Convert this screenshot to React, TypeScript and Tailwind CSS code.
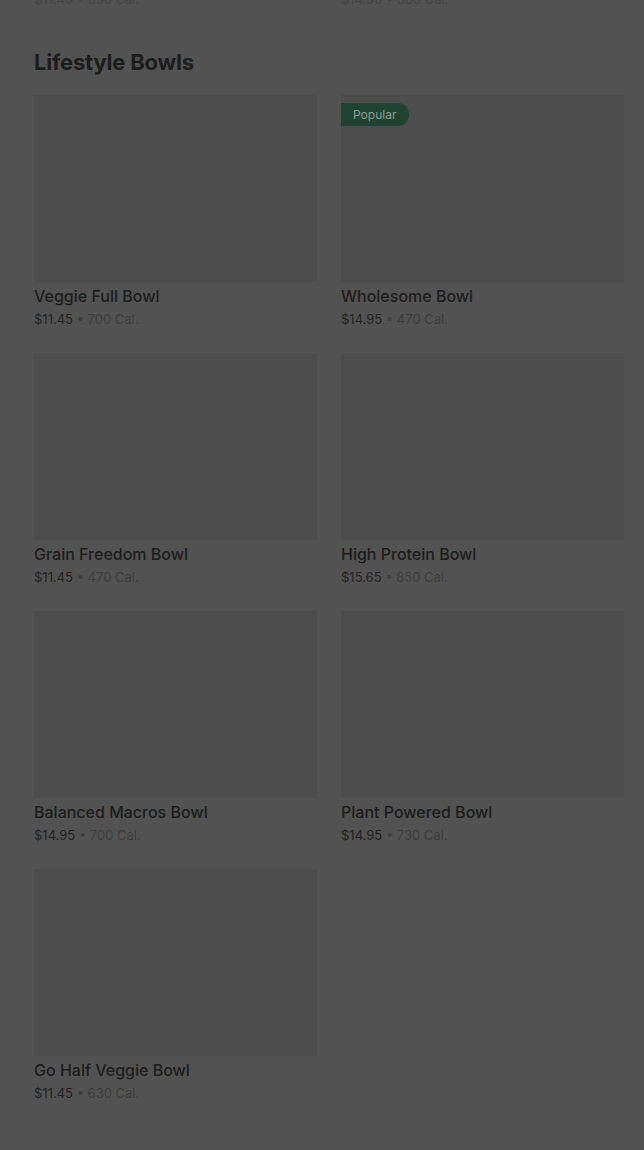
const bowls = [
  { name: 'Veggie Full Bowl', price: '$11.45', cal: '700 Cal.' },
  { name: 'Wholesome Bowl', price: '$14.95', cal: '470 Cal.', popular: true },
  { name: 'Grain Freedom Bowl', price: '$11.45', cal: '470 Cal.' },
  { name: 'High Protein Bowl', price: '$15.65', cal: '850 Cal.' },
  { name: 'Balanced Macros Bowl', price: '$14.95', cal: '700 Cal.' },
  { name: 'Plant Powered Bowl', price: '$14.95', cal: '730 Cal.' },
  { name: 'Go Half Veggie Bowl', price: '$11.45', cal: '630 Cal.' },
];

function BowlCard({ name, price, cal, popular }: { name: string; price: string; cal: string; popular?: boolean }) {
  return (
    <div className="flex flex-col">
      <div className="relative h-[187px] bg-[#4d4d4d]">
        {popular && (
          <span className="absolute left-0 top-[8px] h-[23px] pl-[12px] pr-[13px] flex items-center rounded-r-full bg-[#1e4431] text-[#8e9c93] text-[12px]">
            Popular
          </span>
        )}
      </div>
      <div className="mt-[4px] text-[16px] leading-[20px] font-medium text-[#1c1c1c]">{name}</div>
      <div className="mt-[3px] text-[13px] leading-[20px] text-[#222222]">
        {price} <span className="text-[#3e3e3e]">•</span> <span className="text-[#3d3d3d]">{cal}</span>
      </div>
    </div>
  );
}

export default function App() {
  return (
    <div className="h-[1150px] bg-[#525252] overflow-hidden pl-[34px] pr-[20px]" style={{ fontFamily: 'Inter, "Noto Sans", sans-serif' }}>
      {/* tail of the previous section */}
      <div className="grid grid-cols-2 gap-x-[24px] -mt-[10px] text-[13px] leading-[18px] text-[#454545]">
        <div>$11.45 • 630 Cal.</div>
        <div>$14.95 • 580 Cal.</div>
      </div>

      <h2 className="mt-[39px] text-[22px] leading-[30px] font-bold tracking-[-0.2px] text-[#1c1c1c]">Lifestyle Bowls</h2>

      <div className="mt-[18px] grid grid-cols-2 gap-x-[24px] gap-y-[24px]">
        {bowls.map((b) => (
          <BowlCard key={b.name} {...b} />
        ))}
      </div>

      <h2 className="mt-[41px] text-[22px] leading-[30px] font-bold text-[#1c1c1c]">Sides</h2>
    </div>
  );
}
